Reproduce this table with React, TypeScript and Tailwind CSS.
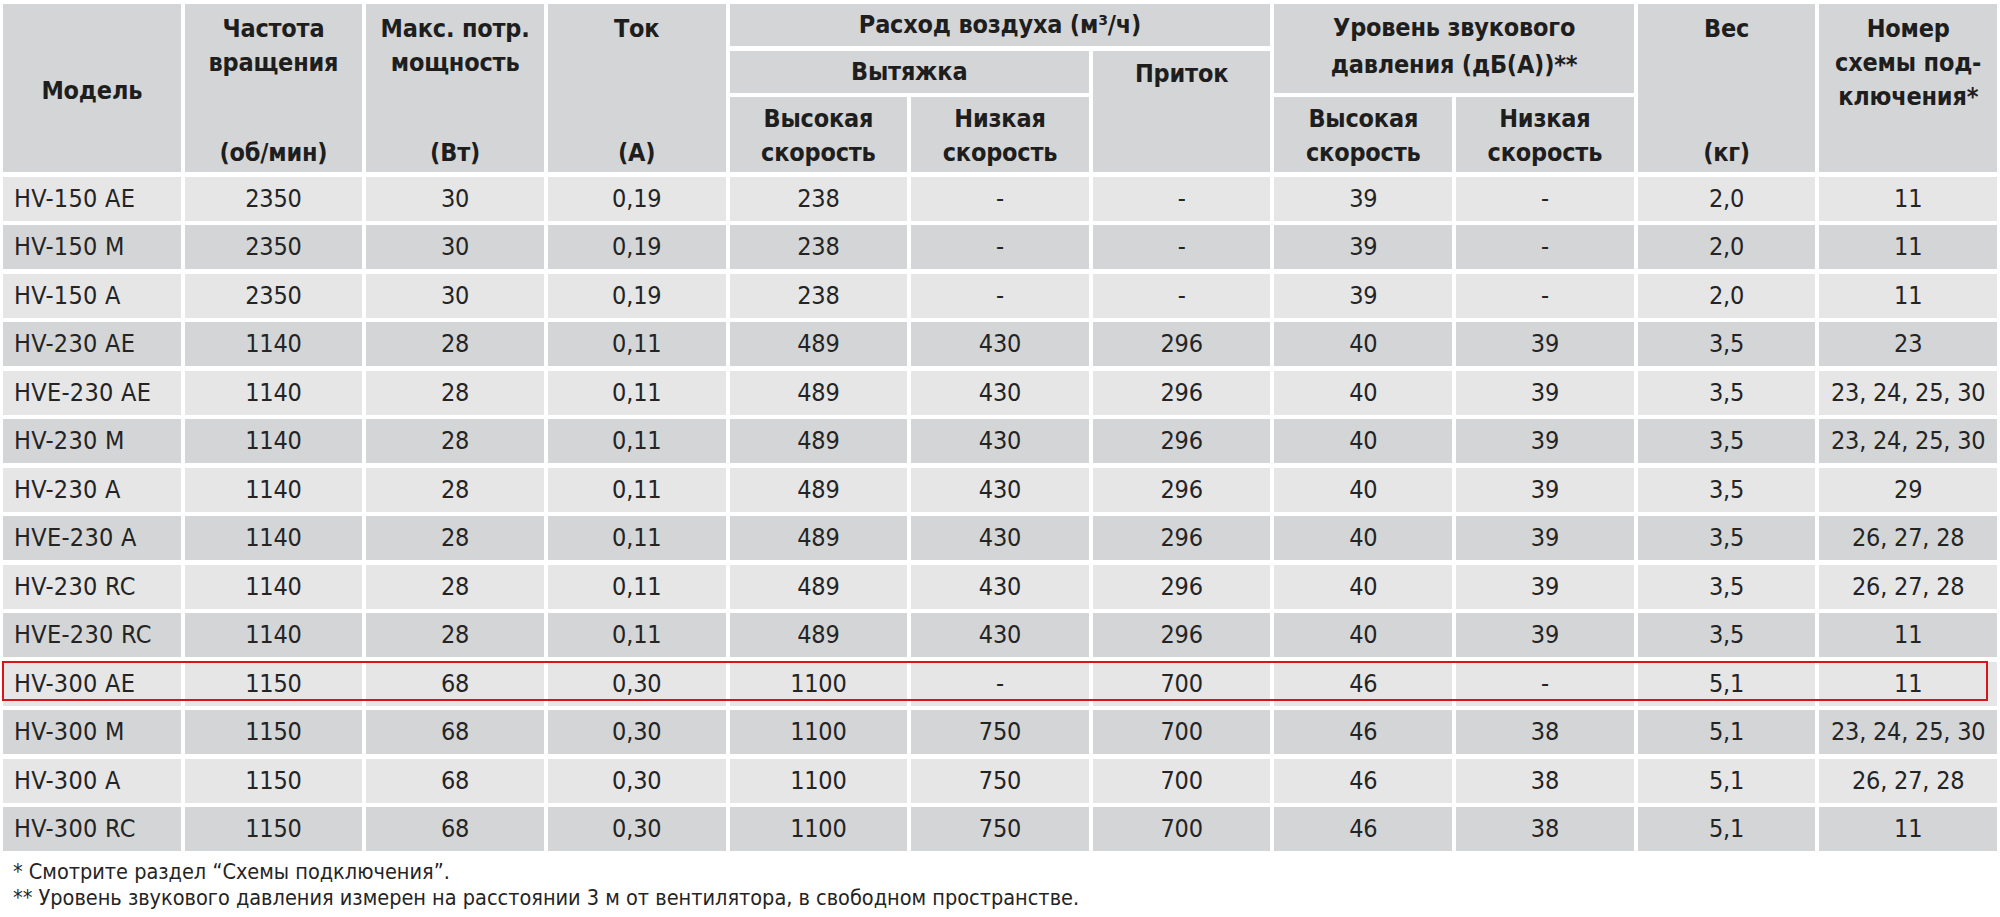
const rows: string[][] = [
  ['HV-150 AE', '2350', '30', '0,19', '238', '-', '-', '39', '-', '2,0', '11'],
  ['HV-150 M', '2350', '30', '0,19', '238', '-', '-', '39', '-', '2,0', '11'],
  ['HV-150 A', '2350', '30', '0,19', '238', '-', '-', '39', '-', '2,0', '11'],
  ['HV-230 AE', '1140', '28', '0,11', '489', '430', '296', '40', '39', '3,5', '23'],
  ['HVE-230 AE', '1140', '28', '0,11', '489', '430', '296', '40', '39', '3,5', '23, 24, 25, 30'],
  ['HV-230 M', '1140', '28', '0,11', '489', '430', '296', '40', '39', '3,5', '23, 24, 25, 30'],
  ['HV-230 A', '1140', '28', '0,11', '489', '430', '296', '40', '39', '3,5', '29'],
  ['HVE-230 A', '1140', '28', '0,11', '489', '430', '296', '40', '39', '3,5', '26, 27, 28'],
  ['HV-230 RC', '1140', '28', '0,11', '489', '430', '296', '40', '39', '3,5', '26, 27, 28'],
  ['HVE-230 RC', '1140', '28', '0,11', '489', '430', '296', '40', '39', '3,5', '11'],
  ['HV-300 AE', '1150', '68', '0,30', '1100', '-', '700', '46', '-', '5,1', '11'],
  ['HV-300 M', '1150', '68', '0,30', '1100', '750', '700', '46', '38', '5,1', '23, 24, 25, 30'],
  ['HV-300 A', '1150', '68', '0,30', '1100', '750', '700', '46', '38', '5,1', '26, 27, 28'],
  ['HV-300 RC', '1150', '68', '0,30', '1100', '750', '700', '46', '38', '5,1', '11'],
];

const HIGHLIGHT = 10;

function HeadCell({ className, children }: { className: string; children: React.ReactNode }) {
  return (
    <div
      className={`flex flex-col items-center bg-[#d4d5d7] text-center text-[25px] font-bold leading-[34px] tracking-[-0.2px] text-[#1e1e1e] ${className}`}
    >
      {children}
    </div>
  );
}

export default function App() {
  return (
    <div
      className="min-h-screen bg-white pt-[4px] pl-[3px] text-[25px] text-[#242424]"
      style={{ fontFamily: '"DejaVu Sans Condensed", "DejaVu Sans", sans-serif', fontStretch: 'condensed' }}
    >
      <div className="flex w-[1994px] flex-col gap-y-[4.5px]">
        {/* header */}
        <div className="grid grid-cols-11 grid-rows-[42px_42px_75px] gap-x-[4px] gap-y-[4.5px]">
          <HeadCell className="col-start-1 row-span-3 row-start-1 justify-center pt-[6px]">Модель</HeadCell>
          <HeadCell className="col-start-2 row-span-3 row-start-1 justify-between pt-[8px] pb-[2px]">
            <span>Частота<br />вращения</span>
            <span>(об/мин)</span>
          </HeadCell>
          <HeadCell className="col-start-3 row-span-3 row-start-1 justify-between pt-[8px] pb-[2px]">
            <span>Макс. потр.<br />мощность</span>
            <span>(Вт)</span>
          </HeadCell>
          <HeadCell className="col-start-4 row-span-3 row-start-1 justify-between pt-[8px] pb-[2px]">
            <span>Ток</span>
            <span>(А)</span>
          </HeadCell>
          <HeadCell className="col-span-3 col-start-5 row-start-1 justify-center">Расход воздуха (м³/ч)</HeadCell>
          <HeadCell className="col-span-2 col-start-8 row-span-2 row-start-1 pt-[5px] leading-[37px]">
            <span>Уровень звукового<br />давления (дБ(А))**</span>
          </HeadCell>
          <HeadCell className="col-start-10 row-span-3 row-start-1 justify-between pt-[8px] pb-[2px]">
            <span>Вес</span>
            <span>(кг)</span>
          </HeadCell>
          <HeadCell className="col-start-11 row-span-3 row-start-1 pt-[8px] leading-[33px]">
            <span>Номер<br />схемы под-<br />ключения*</span>
          </HeadCell>
          <HeadCell className="col-span-2 col-start-5 row-start-2 justify-center">Вытяжка</HeadCell>
          <HeadCell className="col-start-7 row-span-2 row-start-2 pt-[6px]">Приток</HeadCell>
          <HeadCell className="col-start-5 row-start-3 justify-end pb-[2px] leading-[33px]">
            <span>Высокая<br />скорость</span>
          </HeadCell>
          <HeadCell className="col-start-6 row-start-3 justify-end pb-[2px] leading-[33px]">
            <span>Низкая<br />скорость</span>
          </HeadCell>
          <HeadCell className="col-start-8 row-start-3 justify-end pb-[2px] leading-[33px]">
            <span>Высокая<br />скорость</span>
          </HeadCell>
          <HeadCell className="col-start-9 row-start-3 justify-end pb-[2px] leading-[33px]">
            <span>Низкая<br />скорость</span>
          </HeadCell>
        </div>

        {/* body */}
        {rows.map((row, i) => (
          <div key={row[0]} className="relative grid h-[44px] grid-cols-11 gap-x-[4px]">
            {row.map((cell, j) => (
              <div
                key={j}
                className={`flex items-center ${i % 2 === 0 ? 'bg-[#e6e6e7]' : 'bg-[#d4d5d7]'} ${
                  j === 0 ? 'justify-start pl-[11px] tracking-[0.3px]' : 'justify-center tracking-[-0.2px]'
                }`}
              >
                {cell}
              </div>
            ))}
            {i === HIGHLIGHT && (
              <div className="pointer-events-none absolute top-[-1px] right-[9px] left-[-1px] h-[40px] border-2 border-[#d7151d]" />
            )}
          </div>
        ))}
      </div>

      <div className="mt-[8px] pl-[10px] text-[21.5px] leading-[26px] text-[#242424]">
        <p>* Смотрите раздел “Схемы подключения”.</p>
        <p>** Уровень звукового давления измерен на расстоянии 3 м от вентилятора, в свободном пространстве.</p>
      </div>
    </div>
  );
}
